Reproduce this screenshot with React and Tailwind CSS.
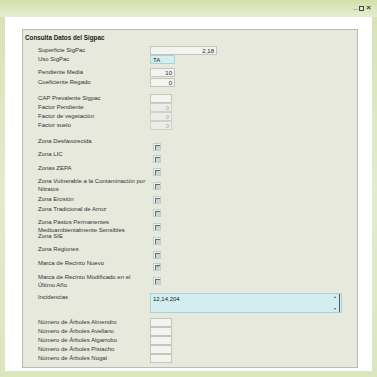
import React from "react";

const font = { fontFamily: '"Liberation Sans", Arial, sans-serif' };

const Box = ({ w, value, tone = "plain", align = "right" }) => {
  const tones = {
    plain: "bg-[#f3f3ef] border-[#c3c6bb] text-[#222]",
    blue: "bg-[#d2eef0] border-[#a9d3d7] text-[#222]",
    off: "bg-[#ecede6] border-[#cfd1c8] text-[#a9a9a9]",
  };
  return (
    <div
      className={`h-[9px] border ${tones[tone]} flex items-center px-[2px] text-[6px] leading-none ${
        align === "right" ? "justify-end" : "justify-start"
      }`}
      style={{ width: w }}
    >
      {value}
    </div>
  );
};

const Check = ({ checked }) => (
  <div className="w-[8px] h-[8px] border border-[#b9d0d3] bg-[#eef2ee] flex items-center justify-center">
    <div className="relative w-[5px] h-[5px] border-t border-l border-[#6b6b6b] bg-[#d2d2ce]">
      {checked && (
        <span className="absolute -top-[3px] left-0 text-[6px] leading-none text-[#777]">✓</span>
      )}
    </div>
  </div>
);

const Row = ({ label, h = 9, children }) => (
  <div className="flex items-start" style={{ height: h }}>
    <div className="w-[112px] text-[6px] leading-[8px] text-[#333] pr-[2px]">{label}</div>
    <div>{children}</div>
  </div>
);

const zonas = [
  { label: "Zona Desfavorecida", h: 13, cb: 6 },
  { label: "Zona LIC", h: 14, cb: 5 },
  { label: "Zonas ZEPA", h: 13, cb: 4 },
  { label: "Zona Vulnerable a la Contaminación por Nitratos", h: 18, cb: 5 },
  { label: "Zona Erosión", h: 10, cb: 1 },
  { label: "Zona Tradicional de Arroz", h: 13, cb: 4 },
  { label: "Zona Pastos Permanentes Medioambientalmente Sensibles", h: 14, cb: 5 },
  { label: "Zona SIE", h: 13, cb: 5 },
  { label: "Zona Regiones", h: 14, cb: 6 },
  { label: "Marca de Recinto Nuevo", h: 14, cb: 4, checked: true },
  { label: "Marca de Recinto Modificado en el Último Año", h: 20, cb: 4 },
];

const arboles = ["Almendro", "Avellano", "Algarrobo", "Pistacho", "Nogal"];

export default function App() {
  return (
    <div
      className="w-[377px] h-[377px] bg-gradient-to-b from-[#d6e3b2] via-[#e3ebcc] to-[#dbe6bd] flex flex-col overflow-hidden"
      style={font}
    >
      <div className="h-[17px] shrink-0 bg-gradient-to-b from-[#d3e0ab] to-[#e6edcf] flex items-start justify-end pr-[6px] pt-[3px] gap-[2px] text-[#333]">
        <span className="text-[7px] leading-none font-bold">_</span>
        <span className="mt-[3px] w-[5px] h-[5px] border border-[#444]"></span>
        <span className="text-[8px] leading-none font-bold mt-[1px]">×</span>
      </div>
      <div className="mx-[5px] h-[354px] bg-white pt-[12px] pl-[17px] pr-[14px]">
        <div className="h-[339px] border border-[#b9bcb1] bg-[#e6e9dc] pt-[4px]">
          <div className="pl-[2px] text-[6.3px] leading-[8px] font-bold text-[#222] mb-[4px]">
            Consulta Datos del Sigpac
          </div>
          <div className="pl-[15px]">
            <Row label="Superficie SigPac">
              <Box w={67} value="2,18" />
            </Row>
            <Row label="Uso SigPac" h={13}>
              <Box w={25} value="TA" tone="blue" align="left" />
            </Row>
            <Row label="Pendiente Media" h={10}>
              <Box w={25} value="10" />
            </Row>
            <Row label="Coeficiente Regado" h={16}>
              <Box w={25} value="0" />
            </Row>
            <Row label="CAP Prevalente Sigpac">
              <Box w={22} value="" />
            </Row>
            <Row label="Factor Pendiente">
              <Box w={22} value="0" tone="off" />
            </Row>
            <Row label="Factor de vegetación">
              <Box w={22} value="0" tone="off" />
            </Row>
            <Row label="Factor suelo" h={16}>
              <Box w={22} value="0" tone="off" />
            </Row>
            {zonas.map((z) => (
              <Row key={z.label} label={z.label} h={z.h}>
                <div className="ml-[3px]" style={{ marginTop: z.cb }}>
                  <Check checked={z.checked} />
                </div>
              </Row>
            ))}
            <Row label="Incidencias" h={25}>
              <div className="w-[192px] h-[20px] border border-[#a9d2d6] bg-[#d2eef0] flex justify-between">
                <span className="text-[6px] leading-none text-[#222] pl-[2px] pt-[2px]">12,14,204</span>
                <div className="mr-[1px] w-[6px] flex flex-col justify-between py-[1px] border-r border-[#555]">
                  <span className="text-[4px] leading-none text-[#555]">▴</span>
                  <span className="text-[4px] leading-none text-[#555]">▾</span>
                </div>
              </div>
            </Row>
            {arboles.map((a) => (
              <Row key={a} label={`Número de Árboles ${a}`}>
                <Box w={22} value="" />
              </Row>
            ))}
          </div>
        </div>
      </div>
    </div>
  );
}
